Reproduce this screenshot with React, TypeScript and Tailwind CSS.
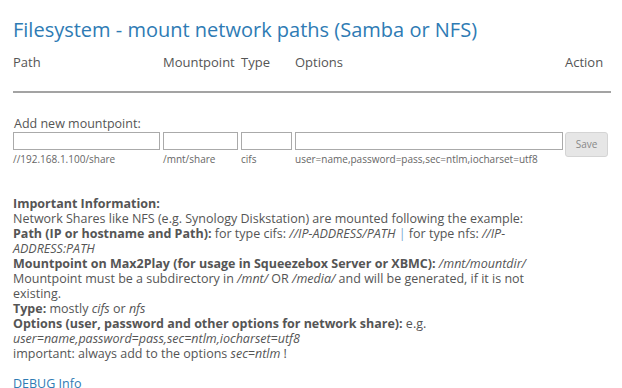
export default function App() {
  const cols = [
    { label: "Path", w: "w-[150px]" },
    { label: "Mountpoint", w: "w-[78px]" },
    { label: "Type", w: "w-[54px]" },
    { label: "Options", w: "w-[270px]" },
  ];

  const fields = [
    { w: "w-[150px]", iw: "w-[147px]", hint: "//192.168.1.100/share" },
    { w: "w-[78px]", iw: "w-[75px]", hint: "/mnt/share" },
    { w: "w-[54px]", iw: "w-[51px]", hint: "cifs" },
    { w: "w-[270px]", iw: "w-[268px]", hint: "user=name,password=pass,sec=ntlm,iocharset=utf8" },
  ];

  return (
    <div className="w-[622px] h-[388px] bg-white overflow-hidden font-['Open_Sans',sans-serif] text-[13px] leading-[15px] text-[#555]">
      <div className="pl-[13px] pr-[11px] pt-[17px]">
        <h1 className="text-[20px] leading-[26px] text-[#2e7bb4]">
          Filesystem - mount network paths (Samba or NFS)
        </h1>

        {/* table head */}
        <div className="flex mt-[11px] h-[16px] items-center">
          {cols.map((c) => (
            <div key={c.label} className={c.w}>{c.label}</div>
          ))}
          <div className="flex-1">Action</div>
        </div>
        <div className="mt-[21px] h-[2px] bg-[#a3a3a3]" />

        {/* add new */}
        <div className="mt-[23px] pl-[1px] text-[12.5px]">Add new mountpoint:</div>
        <div className="flex mt-[1px]">
          {fields.map((f) => (
            <div key={f.hint} className={f.w}>
              <input className={`block ${f.iw} h-[18px] border border-[#aaa] bg-white`} />
              <div className="text-[10px] leading-[12px] mt-[3px] text-[#666]">{f.hint}</div>
            </div>
          ))}
          <button className="w-[43px] h-[25px] border border-[#d4d4d4] bg-[#e6e6e6] rounded-[3px] text-[10px] text-[#888]">
            Save
          </button>
        </div>

        {/* info */}
        <div className="mt-[31px] w-[540px] text-[12.5px]">
          <div className="font-bold">Important Information:</div>
          <div>Network Shares like NFS (e.g. Synology Diskstation) are mounted following the example:</div>
          <div>
            <b>Path (IP or hostname and Path):</b> for type cifs: <i>//IP-ADDRESS/PATH</i>{" "}
            <span className="text-[#7aa9d1]">|</span> for type nfs: <i>//IP-ADDRESS:PATH</i>
          </div>
          <div>
            <b>Mountpoint on Max2Play (for usage in Squeezebox Server or XBMC):</b> <i>/mnt/mountdir/</i>
          </div>
          <div>
            Mountpoint must be a subdirectory in <i>/mnt/</i> OR <i>/media/</i> and will be generated, if it is not existing.
          </div>
          <div>
            <b>Type:</b> mostly <i>cifs</i> or <i>nfs</i>
          </div>
          <div>
            <b>Options (user, password and other options for network share):</b> e.g.{" "}
            <i>user=name,password=pass,sec=ntlm,iocharset=utf8</i>
          </div>
          <div>
            important: always add to the options <i>sec=ntlm</i> !
          </div>
          <div className="mt-[15px] text-[#2e7bb4]">DEBUG Info</div>
        </div>
      </div>
    </div>
  );
}
